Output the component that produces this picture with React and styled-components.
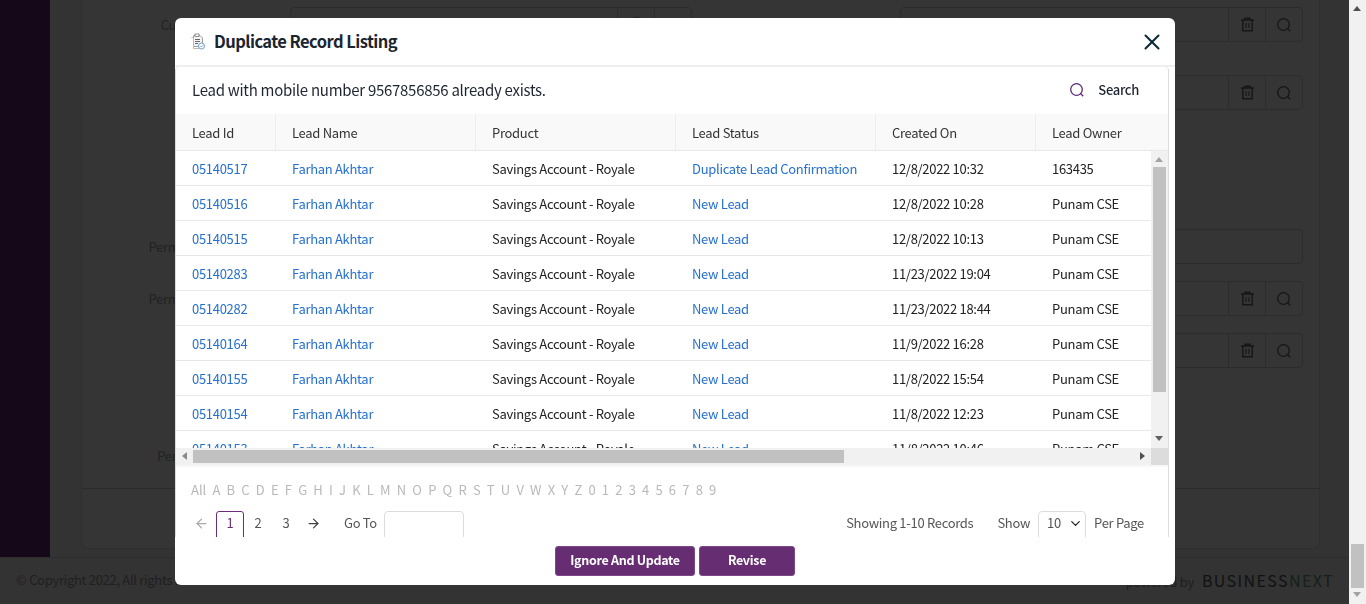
import React from 'react';
import styled, { createGlobalStyle } from 'styled-components';
import { ArrowLeft, ArrowRight, ChevronDown, X } from 'lucide-react';

const GlobalStyle = createGlobalStyle`
  html, body {
    margin: 0;
    height: 100%;
    overflow: hidden;
    background: #333;
    font-family: "Noto Sans CJK SC", "Noto Sans", sans-serif;
    font-size: 13px;
    letter-spacing: -0.3px;
  }
`;

/* ---- page behind the dialog ---- */

const Page = styled.div`
  display: flex;
  flex-direction: column;
  width: 1366px;
  height: 604px;
  overflow: hidden;
`;

const PageBody = styled.div`
  display: flex;
  width: 1349px;
  height: 557px;
`;

const Sidebar = styled.div`
  width: 50px;
  background: #150818;
`;

const Content = styled.div`
  flex: 1;
  padding: 0 29px 8px 31px;
`;

const Card = styled.div`
  height: 100%;
  display: flex;
  flex-direction: column;
  box-sizing: border-box;
  background: #353535;
  border: 1px solid #2f2f2f;
  border-top: 0;
  border-radius: 0 0 6px 6px;
`;

const Form = styled.div`
  height: 489px;
  box-sizing: border-box;
  border-bottom: 1px solid #2b2b2b;
  overflow: hidden;
`;

const FormRow = styled.div`
  display: grid;
  grid-template-columns: 198px 10px 402px 208px 403px;
  height: 35px;
  margin-top: ${(props) => props.gap}px;
  align-items: center;
`;

const FormLabel = styled.div`
  grid-column: 1;
  text-align: right;
  color: #222;
  white-space: nowrap;
`;

const FieldBox = styled.div`
  height: 35px;
  box-sizing: border-box;
  display: flex;
  justify-content: flex-end;
  border: 1px solid #2c2c2c;
  border-radius: 4px;
  grid-column: ${(props) => props.col};
`;

const FieldButton = styled.div`
  width: 36px;
  display: flex;
  align-items: center;
  justify-content: center;
  border-left: 1px solid #2c2c2c;
`;

const Footer = styled.div`
  flex: 1;
  display: flex;
  align-items: center;
  justify-content: space-between;
  padding: 0 15px 3px 16px;
  border-top: 1px solid #2d2d2d;
  color: #1f1f1f;
  margin-right: 17px;
`;

const Brand = styled.span`
  font-size: 16px;
  letter-spacing: 1.4px;
  color: #111;
  margin-left: 8px;
`;

const BrandEnd = styled.span`
  color: #152019;
`;

const PageScrollbar = styled.div`
  position: absolute;
  top: 0;
  right: 0;
  bottom: 0;
  width: 17px;
  background: #f1f1f1;
`;

const PageThumb = styled.div`
  position: absolute;
  top: 544px;
  left: 2px;
  width: 13px;
  height: 44px;
  background: #c1c1c1;
`;

const Arrow = styled.i`
  position: absolute;
  width: 0;
  height: 0;
  border-style: solid;
  border-color: transparent;
  ${(props) => props.dir === 'up' && `
    left: 4px; top: 6px;
    border-width: 0 4px 5px 4px;
    border-bottom-color: ${props.$tone};
  `}
  ${(props) => props.dir === 'down' && `
    left: 4px; bottom: 7px;
    border-width: 5px 4px 0 4px;
    border-top-color: ${props.$tone};
  `}
  ${(props) => props.dir === 'left' && `
    left: 6px; top: 4px;
    border-width: 4px 5px 4px 0;
    border-right-color: ${props.$tone};
  `}
  ${(props) => props.dir === 'right' && `
    right: 6px; top: 4px;
    border-width: 4px 0 4px 5px;
    border-left-color: ${props.$tone};
  `}
`;

/* ---- dialog ---- */

const Modal = styled.div`
  position: fixed;
  left: 175px;
  top: 18px;
  width: 1000px;
  height: 567px;
  display: flex;
  flex-direction: column;
  background: #fff;
  border-radius: 6px;
  overflow: hidden;
`;

const ModalHeader = styled.div`
  height: 49px;
  flex: none;
  box-sizing: border-box;
  display: flex;
  align-items: center;
  padding: 0 10px 0 15px;
  border-bottom: 2px solid #eee;
`;

const ModalTitle = styled.h1`
  flex: 1;
  margin: 0 0 1px 9px;
  font-size: 16.5px;
  line-height: 24px;
  font-weight: 600;
  letter-spacing: -0.55px;
  color: #1b2530;
`;

const CloseButton = styled.div`
  display: flex;
  color: #0d2b3a;
`;

const Panel = styled.div`
  width: 994px;
  height: 470px;
  flex: none;
  box-sizing: border-box;
  overflow: hidden;
  border-left: 1px solid #ddd;
  border-right: 1px solid #ddd;
  border-radius: 4px 4px 0 0;
`;

const MessageBar = styled.div`
  height: 47px;
  display: flex;
  align-items: center;
  justify-content: space-between;
  padding: 0 29px 0 16px;
`;

const Message = styled.div`
  font-size: 15px;
  letter-spacing: -0.28px;
  margin-bottom: 2px;
  color: #1f2530;
`;

const SearchLink = styled.div`
  display: flex;
  align-items: center;
  gap: 13px;
  font-weight: 500;
  margin-bottom: 2px;
  color: #1f2530;
`;

const HeadRow = styled.div`
  display: grid;
  grid-template-columns: 100px 200px 200px 200px 160px 132px;
  height: 37px;
  box-sizing: border-box;
  background: #f9f9f9;
  border-bottom: 1px solid #e8e8e8;
`;

const HeadCell = styled.div`
  display: flex;
  align-items: center;
  padding-left: 16px;
  color: #333;
  border-right: ${(props) => (props.last ? '0' : '1px solid #eee')};
`;

const TableArea = styled.div`
  display: flex;
  height: 297px;
`;

const TableRows = styled.div`
  width: 975px;
  overflow: hidden;
`;

const Row = styled.div`
  display: grid;
  grid-template-columns: 100px 200px 200px 200px 160px 115px;
  height: 35px;
  box-sizing: border-box;
  border-bottom: 1px solid #e8e8e8;
`;

const Cell = styled.div`
  display: flex;
  align-items: center;
  padding-left: 16px;
  white-space: nowrap;
  color: ${(props) => (props.link ? '#2670d0' : '#222')};
`;

const VTrack = styled.div`
  position: relative;
  width: 17px;
  background: #f1f1f1;
`;

const VThumb = styled.div`
  position: absolute;
  top: 16px;
  left: 2px;
  width: 13px;
  height: 225px;
  background: #c1c1c1;
`;

const HBar = styled.div`
  display: flex;
  height: 19px;
  box-sizing: border-box;
  border-bottom: 2px solid #f7f7f7;
`;

const HTrack = styled.div`
  position: relative;
  width: 975px;
  background: #f1f1f1;
`;

const HThumb = styled.div`
  position: absolute;
  left: 17px;
  top: 2px;
  width: 651px;
  height: 13px;
  background: #c1c1c1;
`;

const Corner = styled.div`
  flex: 1;
  background: #dcdcdc;
`;

const Alphabet = styled.div`
  display: flex;
  gap: 6.2px;
  padding: 12px 0 0 15px;
  height: 22px;
  line-height: 22px;
  letter-spacing: 0;
  color: #b9b9b9;
`;

/* the panel cuts this row off at its bottom, so the boxes lose their lower border */
const Pager = styled.div`
  display: flex;
  align-items: flex-start;
  height: 30px;
  margin-top: 10px;
  padding: 0 24px 0 17px;
  line-height: 24px;
  color: #555;
`;

const PageArrow = styled.span`
  display: flex;
  box-sizing: border-box;
  width: ${(props) => (props.off ? 23 : 21)}px;
  justify-content: ${(props) => (props.off ? 'flex-start' : 'flex-end')};
  padding-left: ${(props) => (props.off ? 1 : 0)}px;
  margin-top: 5px;
  color: ${(props) => (props.off ? '#aaa' : '#444')};
`;

const PageNumber = styled.div`
  width: 28px;
  height: 30px;
  box-sizing: border-box;
  text-align: center;
  line-height: 22px;
  border: 1px solid ${(props) => (props.active ? '#6b2d75' : 'transparent')};
  border-radius: 3px;
  color: ${(props) => (props.active ? '#6b2d75' : '#555')};
`;

const GoTo = styled.span`
  margin-left: 23px;
  width: 40px;
`;

const Box = styled.div`
  height: 30px;
  width: ${(props) => props.w}px;
  box-sizing: border-box;
  border: 1px solid #ddd;
  border-radius: 4px;
  display: flex;
  align-items: flex-start;
  justify-content: space-between;
  line-height: 22px;
  padding: 0 2px 0 8px;
`;

const SelectArrow = styled(ChevronDown)`
  margin-top: 4px;
`;

const Spacer = styled.div`
  flex: 1;
`;

const Records = styled.span`
  margin-right: 24px;
`;

const ShowLabel = styled.span`
  margin-right: 8px;
`;

const PerPage = styled.span`
  margin-left: 8px;
`;

const ModalFooter = styled.div`
  flex: 1;
  display: flex;
  justify-content: center;
  gap: 4px;
  padding-top: 9px;
`;

const Action = styled.button`
  height: 30px;
  width: ${(props) => props.w}px;
  padding: 0 0 3px;
  font: 600 12.5px "Noto Sans CJK SC", "Noto Sans", sans-serif;
  letter-spacing: -0.3px;
  color: #fff;
  background: #662d72;
  border: 1px solid #7b4a86;
  border-radius: 3px;
`;

const TitleIcon = () => (
  <svg width="15" height="17" viewBox="0 0 15 17" fill="none">
    <path d="M3.5 2.5h6.5l2.5 2.5v8.5h-9z" fill="#f4f4f4" stroke="#9aa0a8" />
    <path d="M1.5 4.5h2v11h6" stroke="#c3b7a8" />
    <rect x="5" y="1" width="4" height="2.5" fill="#fff" stroke="#777" strokeWidth="0.8" />
    <path d="M5 6.5h5M5 8.5h5M5 10.5h3" stroke="#555" strokeWidth="0.9" />
    <circle cx="11.5" cy="13" r="3" fill="#fff" stroke="#6d9bd0" />
    <path d="M10.3 13l1 1 1.6-1.8" stroke="#6d9bd0" strokeWidth="0.8" />
  </svg>
);

const SearchIcon = ({ color }) => (
  <svg width="16" height="16" viewBox="0 0 16 16" fill="none" stroke={color} strokeWidth="1.3">
    <circle cx="7.5" cy="7.5" r="5.8" />
    <path d="M11.8 11.8l2.4 2.4" />
  </svg>
);

const TrashIcon = () => (
  <svg width="15" height="15" viewBox="0 0 15 15" fill="none" stroke="#161616" strokeWidth="1.4">
    <path d="M1 3h13M5 3V1.2h5V3M2.8 3v10.8h9.4V3" />
    <path d="M6 6v5M9 6v5" strokeWidth="1.1" />
  </svg>
);

const letters = ['All', ...'ABCDEFGHIJKLMNOPQRSTUVWXYZ0123456789'];
const heads = ['Lead Id', 'Lead Name', 'Product', 'Lead Status', 'Created On', 'Lead Owner'];

const rows = [
  ['05140517', 'Duplicate Lead Confirmation', '12/8/2022 10:32', '163435'],
  ['05140516', 'New Lead', '12/8/2022 10:28', 'Punam CSE'],
  ['05140515', 'New Lead', '12/8/2022 10:13', 'Punam CSE'],
  ['05140283', 'New Lead', '11/23/2022 19:04', 'Punam CSE'],
  ['05140282', 'New Lead', '11/23/2022 18:44', 'Punam CSE'],
  ['05140164', 'New Lead', '11/9/2022 16:28', 'Punam CSE'],
  ['05140155', 'New Lead', '11/8/2022 15:54', 'Punam CSE'],
  ['05140154', 'New Lead', '11/8/2022 12:23', 'Punam CSE'],
  ['05140153', 'New Lead', '11/8/2022 10:46', 'Punam CSE'],
];

const Tools = () => (
  <>
    <FieldButton><TrashIcon /></FieldButton>
    <FieldButton><SearchIcon color="#161616" /></FieldButton>
  </>
);

const App = () => (
  <>
    <GlobalStyle />
    <Page>
      <PageBody>
        <Sidebar />
        <Content>
          <Card>
            <Form>
              <FormRow gap={7}>
                <FormLabel>Current Address Ln 1</FormLabel>
                <FieldBox col={3}><Tools /></FieldBox>
                <FieldBox col={5}><Tools /></FieldBox>
              </FormRow>
              <FormRow gap={33}>
                <FormLabel>City</FormLabel>
                <FieldBox col={3} />
                <FieldBox col={5}><Tools /></FieldBox>
              </FormRow>
              <FormRow gap={119}>
                <FormLabel>Permanent Address 1 *</FormLabel>
                <FieldBox col={3} />
                <FieldBox col={5} />
              </FormRow>
              <FormRow gap={17}>
                <FormLabel>Permanent Address 2 *</FormLabel>
                <FieldBox col={3} />
                <FieldBox col={5}><Tools /></FieldBox>
              </FormRow>
              <FormRow gap={17}>
                <FormLabel>City</FormLabel>
                <FieldBox col={3} />
                <FieldBox col={5}><Tools /></FieldBox>
              </FormRow>
              <FormRow gap={70}>
                <FormLabel>Permanent Pincode *</FormLabel>
              </FormRow>
            </Form>
          </Card>
        </Content>
      </PageBody>
      <Footer>
        <span>© Copyright 2022, All rights reserved.</span>
        <span>
          powered by
          <Brand>BUSINESS<BrandEnd>NEXT</BrandEnd></Brand>
        </span>
      </Footer>
      <PageScrollbar>
        <Arrow dir="up" $tone="#505050" />
        <PageThumb />
        <Arrow dir="down" $tone="#a3a3a3" />
      </PageScrollbar>
    </Page>

    <Modal>
      <ModalHeader>
        <TitleIcon />
        <ModalTitle>Duplicate Record Listing</ModalTitle>
        <CloseButton><X size={26} strokeWidth={1.9} /></CloseButton>
      </ModalHeader>
      <Panel>
        <MessageBar>
          <Message>Lead with mobile number 9567856856 already exists.</Message>
          <SearchLink>
            <SearchIcon color="#5d2a7a" />
            <span>Search</span>
          </SearchLink>
        </MessageBar>
        <HeadRow>
          {heads.map((head, i) => (
            <HeadCell key={head} last={i === heads.length - 1}>{head}</HeadCell>
          ))}
        </HeadRow>
        <TableArea>
          <TableRows>
            {rows.map((row) => (
              <Row key={row[0]}>
                <Cell link>{row[0]}</Cell>
                <Cell link>Farhan Akhtar</Cell>
                <Cell>Savings Account - Royale</Cell>
                <Cell link>{row[1]}</Cell>
                <Cell>{row[2]}</Cell>
                <Cell>{row[3]}</Cell>
              </Row>
            ))}
          </TableRows>
          <VTrack>
            <Arrow dir="up" $tone="#a3a3a3" />
            <VThumb />
            <Arrow dir="down" $tone="#606060" />
          </VTrack>
        </TableArea>
        <HBar>
          <HTrack>
            <Arrow dir="left" $tone="#8a8a8a" />
            <HThumb />
            <Arrow dir="right" $tone="#505050" />
          </HTrack>
          <Corner />
        </HBar>
        <Alphabet>
          {letters.map((letter) => <span key={letter}>{letter}</span>)}
        </Alphabet>
        <Pager>
          <PageArrow off><ArrowLeft size={15} /></PageArrow>
          <PageNumber active>1</PageNumber>
          <PageNumber>2</PageNumber>
          <PageNumber>3</PageNumber>
          <PageArrow><ArrowRight size={15} /></PageArrow>
          <GoTo>Go To</GoTo>
          <Box w={80} />
          <Spacer />
          <Records>Showing 1-10 Records</Records>
          <ShowLabel>Show</ShowLabel>
          <Box w={48}>
            <span>10</span>
            <SelectArrow size={15} color="#222" />
          </Box>
          <PerPage>Per Page</PerPage>
        </Pager>
      </Panel>
      <ModalFooter>
        <Action w={140}>Ignore And Update</Action>
        <Action w={96}>Revise</Action>
      </ModalFooter>
    </Modal>
  </>
);

export default App;
